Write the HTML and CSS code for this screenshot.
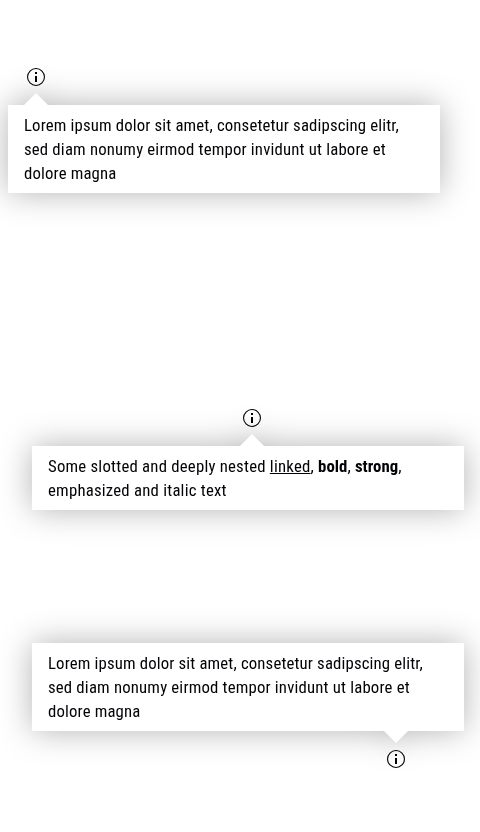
FILE: index.html
```html
<!DOCTYPE html>
<html lang="en">
<head>
<meta charset="utf-8">
<title>Popover</title>
<link rel="stylesheet" href="styles.css">
</head>
<body>
<svg class="defs" width="0" height="0" aria-hidden="true">
  <symbol id="info" viewBox="0 0 24 24">
    <circle cx="12" cy="12" r="8.45" fill="none" stroke="#010205" stroke-width="1.1"/>
    <path d="M11 7h2v2h-2zM11 11h2v6h-2z" fill="#010205"/>
  </symbol>
</svg>
<main class="page">
  <section class="example example-start">
    <svg class="icon"><use href="#info"/></svg>
    <div class="popover">
      <i class="arrow"></i>
      <p class="content"><span class="line">Lorem ipsum dolor sit amet, consetetur sadipscing elitr,</span><span class="line line-wide">sed diam nonumy eirmod tempor invidunt ut labore et</span><span class="line">dolore magna</span></p>
    </div>
  </section>
  <section class="example example-center">
    <svg class="icon"><use href="#info"/></svg>
    <div class="popover">
      <i class="arrow"></i>
      <p class="content"><span class="line line-wider">Some slotted and deeply nested <a class="link">linked</a>, <b>bold</b>, <strong>strong</strong>,</span><span class="line line-wider">emphasized and italic text</span></p>
    </div>
  </section>
  <section class="example example-top">
    <div class="popover">
      <i class="arrow"></i>
      <p class="content"><span class="line">Lorem ipsum dolor sit amet, consetetur sadipscing elitr,</span><span class="line line-wide">sed diam nonumy eirmod tempor invidunt ut labore et</span><span class="line">dolore magna</span></p>
    </div>
    <svg class="icon"><use href="#info"/></svg>
  </section>
</main>
</body>
</html>
```
FILE: styles.css
```css
* { box-sizing: border-box; }
body { margin: 0; background: #fff; color: #010205; font: 16.75px/24px Roboto, "Liberation Sans", sans-serif; font-stretch: 75%; }
.defs { display: block; }
.page { display: flex; flex-direction: column; height: 832px; padding-top: 65px; overflow: hidden; }
.example { display: flex; flex-direction: column; width: 432px; }
.example-start { margin-left: 8px; }
.example-center { margin: 213px 0 0 32px; }
.example-top { margin: 133px 0 0 32px; }
.icon { display: block; width: 24px; height: 24px; position: relative; z-index: 1; }
.example-start .icon { margin-left: 16px; }
.example-center .icon { margin-left: 208px; }
.example-top .icon { margin: 16px 0 0 352px; }
.popover { position: relative; background: #fff; padding: 8px 16px; filter: drop-shadow(0 0 16px rgba(0, 0, 0, 0.3)); }
.example-start .popover, .example-center .popover { margin-top: 16px; }
.arrow { position: absolute; top: -12px; left: 16px; border: solid transparent; border-width: 0 12px 12px; border-bottom-color: #fff; }
.example-center .arrow { left: 208px; }
.example-top .arrow { top: auto; bottom: -12px; left: 352px; border-width: 12px 12px 0; border-top-color: #fff; }
.content { margin: 0; }
.line { display: block; white-space: nowrap; letter-spacing: 0.15px; }
.line-wide { letter-spacing: 0.18px; }
.line-wider { letter-spacing: 0.22px; }
.line b, .line strong { letter-spacing: 0.03px; }
.link { text-decoration: underline; }
```
